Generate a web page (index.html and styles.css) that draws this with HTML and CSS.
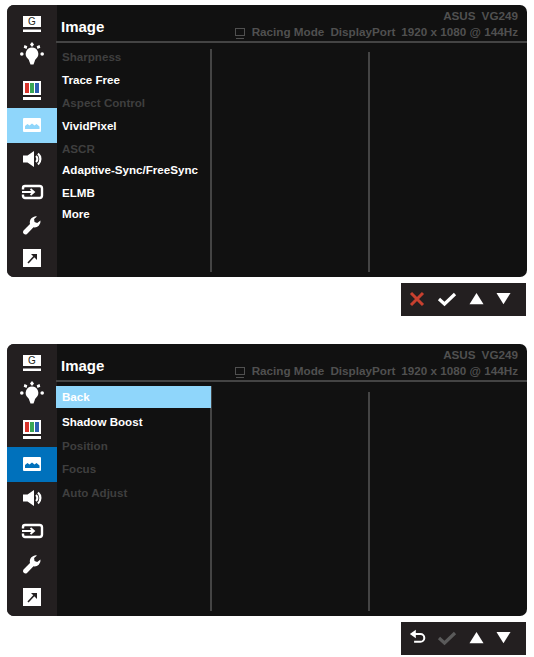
FILE: index.html
```html
<!DOCTYPE html>
<html lang="en">
<head>
  <meta charset="UTF-8" />
  <title>Image menu</title>
  <link rel="stylesheet" href="styles.css">
</head>
<body>

  <svg class="defs" width="0" height="0">
    <symbol id="i-gamevisual" viewBox="0 0 24 24">
      <rect x="3" y="4" width="18" height="11" fill="#fff" />
      <rect x="3" y="17.500" width="18" height="2.500" fill="#fff" />
    </symbol>
    <symbol id="i-bulb" viewBox="0 0 24 24">
      <path d="M12 5.500a6.300 6.300 0 0 1 4.300 10.900c-1 1-1.300 1.700-1.600 2.800L13.500 22.500h-3l-1.200-3.300c-.3-1.100-.6-1.800-1.600-2.800A6.300 6.300 0 0 1 12 5.500z" fill="#fff" />
      <path d="M12 0l2 2.500-2 2.500-2-2.500z" fill="#fff" />
      <path d="M4.500 3l2.800 1.200-.8 2.800-2.800-1.200z" fill="#fff" />
      <path d="M19.500 3l.8 2.800-2.800 1.200-.8-2.800z" fill="#fff" />
      <circle cx="1.800" cy="12" r="1.800" fill="#fff" />
      <circle cx="22.200" cy="12" r="1.800" fill="#fff" />
    </symbol>
    <symbol id="i-color" viewBox="0 0 24 24">
      <rect x="3" y="2" width="18" height="14" fill="#fff" />
      <rect x="5" y="4" width="4" height="10" fill="#d8342c" />
      <rect x="10" y="4" width="4" height="10" fill="#3aa655" />
      <rect x="15" y="4" width="4" height="10" fill="#2c5fb0" />
      <rect x="3" y="18" width="18" height="3" fill="#fff" />
    </symbol>
    <symbol id="i-image" viewBox="0 0 24 24">
      <rect x="3" y="5" width="18" height="14" rx="1" fill="#fff" />
      <path d="M5 16v-3l2.500-2 2 1.500 2.500-2 2.500 2 2-1.500 3 2.500V16z" fill="currentColor" />
    </symbol>
    <symbol id="i-sound" viewBox="0 0 24 24">
      <path d="M3 8.500h4.500L14 4v16l-6.500-4.500H3z" fill="#fff" />
      <path d="M16 9a4 4 0 0 1 0 6M18 6.500a7.500 7.500 0 0 1 0 11" fill="none" stroke="#fff" stroke-width="2.200" />
    </symbol>
    <symbol id="i-input" viewBox="0 0 24 24">
      <path d="M3 9.500V8a2 2 0 0 1 2-2h14.500a2.500 2.500 0 0 1 2.500 2.500v7a2.500 2.500 0 0 1-2.500 2.500H5a2 2 0 0 1-2-2v-1.500" fill="none" stroke="#fff" stroke-width="2.400" />
      <path d="M2 12h11M10.500 9l3.500 3-3.500 3" fill="none" stroke="#fff" stroke-width="1.800" />
    </symbol>
    <symbol id="i-wrench" viewBox="0 0 24 24">
      <path d="M20.500 7.500l-3.300 2.500-2.700-1-.4-3L17 3.500a6 6 0 0 0-7 7.500L3.500 17.500a2.500 2.500 0 0 0 3.500 3.500l6.500-6.700a6 6 0 0 0 7-6.800z" fill="#fff" />
    </symbol>
    <symbol id="i-shortcut" viewBox="0 0 24 24">
      <rect x="3" y="3" width="18" height="18" fill="#fff" />
      <path d="M8 17l6.500-7" fill="none" stroke="#231f20" stroke-width="1.600" />
      <path d="M11 8h6v6z" fill="#231f20" />
    </symbol>
    <symbol id="i-close" viewBox="0 0 16 16">
      <path d="M2 2l12 12M14 2L2 14" fill="none" stroke="#c8402f" stroke-width="3" />
    </symbol>
    <symbol id="i-check" viewBox="0 0 20 16">
      <path d="M2 8l5.500 5L18 3" fill="none" stroke="currentColor" stroke-width="3.200" />
    </symbol>
    <symbol id="i-up" viewBox="0 0 16 16">
      <path d="M8 2l7.500 12H.5z" fill="#fff" />
    </symbol>
    <symbol id="i-down" viewBox="0 0 16 16">
      <path d="M.5 2h15L8 14z" fill="#fff" />
    </symbol>
    <symbol id="i-back" viewBox="0 0 20 20">
      <path d="M8 1v10L1 6z" fill="#fff" />
      <path d="M7 6h6.500a4.500 4.500 0 0 1 0 9H6" fill="none" stroke="#fff" stroke-width="2.400" />
    </symbol>
  </svg>

  <!-- first screen -->
  <section class="osd">
    <nav class="side">
      <div class="side-item"><svg viewBox="0 0 24 24"><use href="#i-gamevisual" /><text x="12" y="13" text-anchor="middle" class="g-letter">G</text></svg></div>
      <div class="side-item lift-3"><svg><use href="#i-bulb" /></svg></div>
      <div class="side-item"><svg><use href="#i-color" /></svg></div>
      <div class="side-item side-item-light"><svg><use href="#i-image" /></svg></div>
      <div class="side-item lift-1"><svg><use href="#i-sound" /></svg></div>
      <div class="side-item lift-1"><svg><use href="#i-input" /></svg></div>
      <div class="side-item lift-2"><svg><use href="#i-wrench" /></svg></div>
      <div class="side-item lift-2"><svg><use href="#i-shortcut" /></svg></div>
    </nav>
    <div class="main">
      <header class="head">
        <h1>Image</h1>
        <div class="info">
          <div class="model"><span>ASUS</span><span>VG249</span></div>
          <div class="status">
            <span class="monitor-mark"></span>
            <span>Racing Mode</span><span>DisplayPort</span><span>1920 x 1080 @ 144Hz</span>
          </div>
        </div>
      </header>
      <div class="cols">
        <ul class="menu">
          <li class="off">Sharpness</li>
          <li>Trace Free</li>
          <li class="off">Aspect Control</li>
          <li>VividPixel</li>
          <li class="off tight">ASCR</li>
          <li>Adaptive-Sync/FreeSync</li>
          <li class="tight">ELMB</li>
          <li>More</li>
        </ul>
        <div class="col"></div>
        <div class="col col-last"></div>
      </div>
    </div>
  </section>
  <div class="keys">
    <svg class="key"><use href="#i-close" /></svg>
    <svg class="key key-check"><use href="#i-check" /></svg>
    <svg class="key key-arrow"><use href="#i-up" /></svg>
    <svg class="key key-arrow"><use href="#i-down" /></svg>
  </div>

  <!-- second screen -->
  <section class="osd osd-second">
    <nav class="side">
      <div class="side-item"><svg viewBox="0 0 24 24"><use href="#i-gamevisual" /><text x="12" y="13" text-anchor="middle" class="g-letter">G</text></svg></div>
      <div class="side-item lift-3"><svg><use href="#i-bulb" /></svg></div>
      <div class="side-item"><svg><use href="#i-color" /></svg></div>
      <div class="side-item side-item-blue"><svg><use href="#i-image" /></svg></div>
      <div class="side-item lift-1"><svg><use href="#i-sound" /></svg></div>
      <div class="side-item lift-1"><svg><use href="#i-input" /></svg></div>
      <div class="side-item lift-2"><svg><use href="#i-wrench" /></svg></div>
      <div class="side-item lift-2"><svg><use href="#i-shortcut" /></svg></div>
    </nav>
    <div class="main">
      <header class="head">
        <h1>Image</h1>
        <div class="info">
          <div class="model"><span>ASUS</span><span>VG249</span></div>
          <div class="status">
            <span class="monitor-mark"></span>
            <span>Racing Mode</span><span>DisplayPort</span><span>1920 x 1080 @ 144Hz</span>
          </div>
        </div>
      </header>
      <div class="cols cols-sub">
        <ul class="menu menu-sub">
          <li class="selected">Back</li>
          <li>Shadow Boost</li>
          <li class="off tight">Position</li>
          <li class="off">Focus</li>
          <li class="off">Auto Adjust</li>
        </ul>
        <div class="col"></div>
        <div class="col col-last"></div>
      </div>
    </div>
  </section>
  <div class="keys keys-second">
    <svg class="key key-back"><use href="#i-back" /></svg>
    <svg class="key key-check key-dim"><use href="#i-check" /></svg>
    <svg class="key key-arrow"><use href="#i-up" /></svg>
    <svg class="key key-arrow"><use href="#i-down" /></svg>
  </div>

</body>
</html>
```

FILE: styles.css
```css
body {
  margin: 0;
  padding: 5px 0 0 7px;
  background-color: #fff;
  font-family: "Liberation Sans", Arial, sans-serif;
  color: #fff;
}

.defs {
  display: block;
  height: 0;
}

.g-letter {
  font-family: "Liberation Sans", Arial, sans-serif;
  font-size: 10px;
  fill: #231f20;
}

/* panel */
.osd {
  display: flex;
  width: 520px;
  height: 272px;
  border-radius: 7px;
  overflow: hidden;
  background-color: #111;
}

.osd-second {
  margin-top: 28px;
}

.side {
  display: flex;
  flex-direction: column;
  flex: 0 0 50px;
  box-sizing: border-box;
  padding-top: 2px;
  background-color: #231f20;
}

.side-item {
  flex: 1;
  display: flex;
  align-items: center;
  justify-content: center;
  color: #8fd6fb;
}

.side-item svg {
  width: 24px;
  height: 24px;
}

/* icon sits a little above the middle of its cell */
.lift-1 svg {
  margin-bottom: 2px;
}

.lift-2 svg {
  margin-bottom: 4px;
}

.lift-3 svg {
  margin-bottom: 6px;
}

.side-item-light {
  flex: 0 0 35px;
  background-color: #8fd6fb;
}

.side-item-blue {
  flex: 0 0 35px;
  background-color: #0071bc;
  color: #0071bc;
}

.main {
  flex: 1;
  display: flex;
  flex-direction: column;
  min-width: 0;
}

/* title bar */
.head {
  display: flex;
  justify-content: space-between;
  height: 38px;
  box-sizing: border-box;
  padding: 0 9px 0 5px;
  border-bottom: 2px solid #444;
  margin-left: -1px;
}

h1 {
  margin: 12px 0 0;
  font-size: 15px;
  line-height: 20px;
  font-weight: bold;
}

.info {
  padding-top: 4px;
  font-size: 11.700px;
  line-height: 14px;
  font-weight: bold;
  color: #505050;
  text-align: right;
}

.model,
.status {
  display: flex;
  justify-content: flex-end;
  gap: 6px;
}

.status {
  align-items: center;
  margin-top: 2px;
}

.monitor-mark {
  width: 8px;
  height: 6px;
  margin-right: 1px;
  border: 1px solid #505050;
  box-shadow: 0 3px 0 -1px #111, 0 4px 0 -1px #505050;
}

/* columns */
.cols {
  flex: 1;
  display: flex;
  padding: 9px 0 5px;
}

.cols-sub {
  padding-top: 10px;
}

.menu {
  flex: 0 0 155px;
  box-sizing: border-box;
  margin: -3px 0 0;
  padding: 0;
  list-style: none;
  border-right: 2px solid #444;
  font-size: 11.600px;
  font-weight: bold;
}

.menu li {
  height: 23px;
  padding-left: 5px;
  line-height: 15px;
}

.menu li.tight {
  height: 21px;
}

.menu .off {
  color: #3f3f3f;
}

.menu-sub {
  margin: -6px 0 0 -1px;
  flex-basis: 156px;
}

.menu-sub li {
  height: 24px;
  line-height: 24px;
  padding-left: 6px;
}

.menu-sub li.tight {
  height: 23px;
}

.menu-sub li.selected {
  height: 22px;
  line-height: 22px;
  margin: 0 -1px 2px 0;
  background-color: #8fd6fb;
}

.col {
  flex: 0 0 158px;
  box-sizing: border-box;
  border-right: 2px solid #444;
}

.col-last {
  flex: 1;
  border-right: 0;
}

/* buttons under the panel */
.keys {
  display: flex;
  align-items: center;
  gap: 12px;
  box-sizing: border-box;
  width: 125px;
  height: 33px;
  margin: 6px 0 0 394px;
  padding: 0 0 2px 8px;
  background-color: #231f20;
}

.key {
  width: 16px;
  height: 16px;
}

.key-arrow {
  width: 15px;
  height: 15px;
}

.key-check {
  width: 20px;
  color: #fff;
}

.key-back {
  width: 17px;
  height: 17px;
  margin-right: -1px;
}

.key-dim {
  color: #5a5a5a;
}
```
